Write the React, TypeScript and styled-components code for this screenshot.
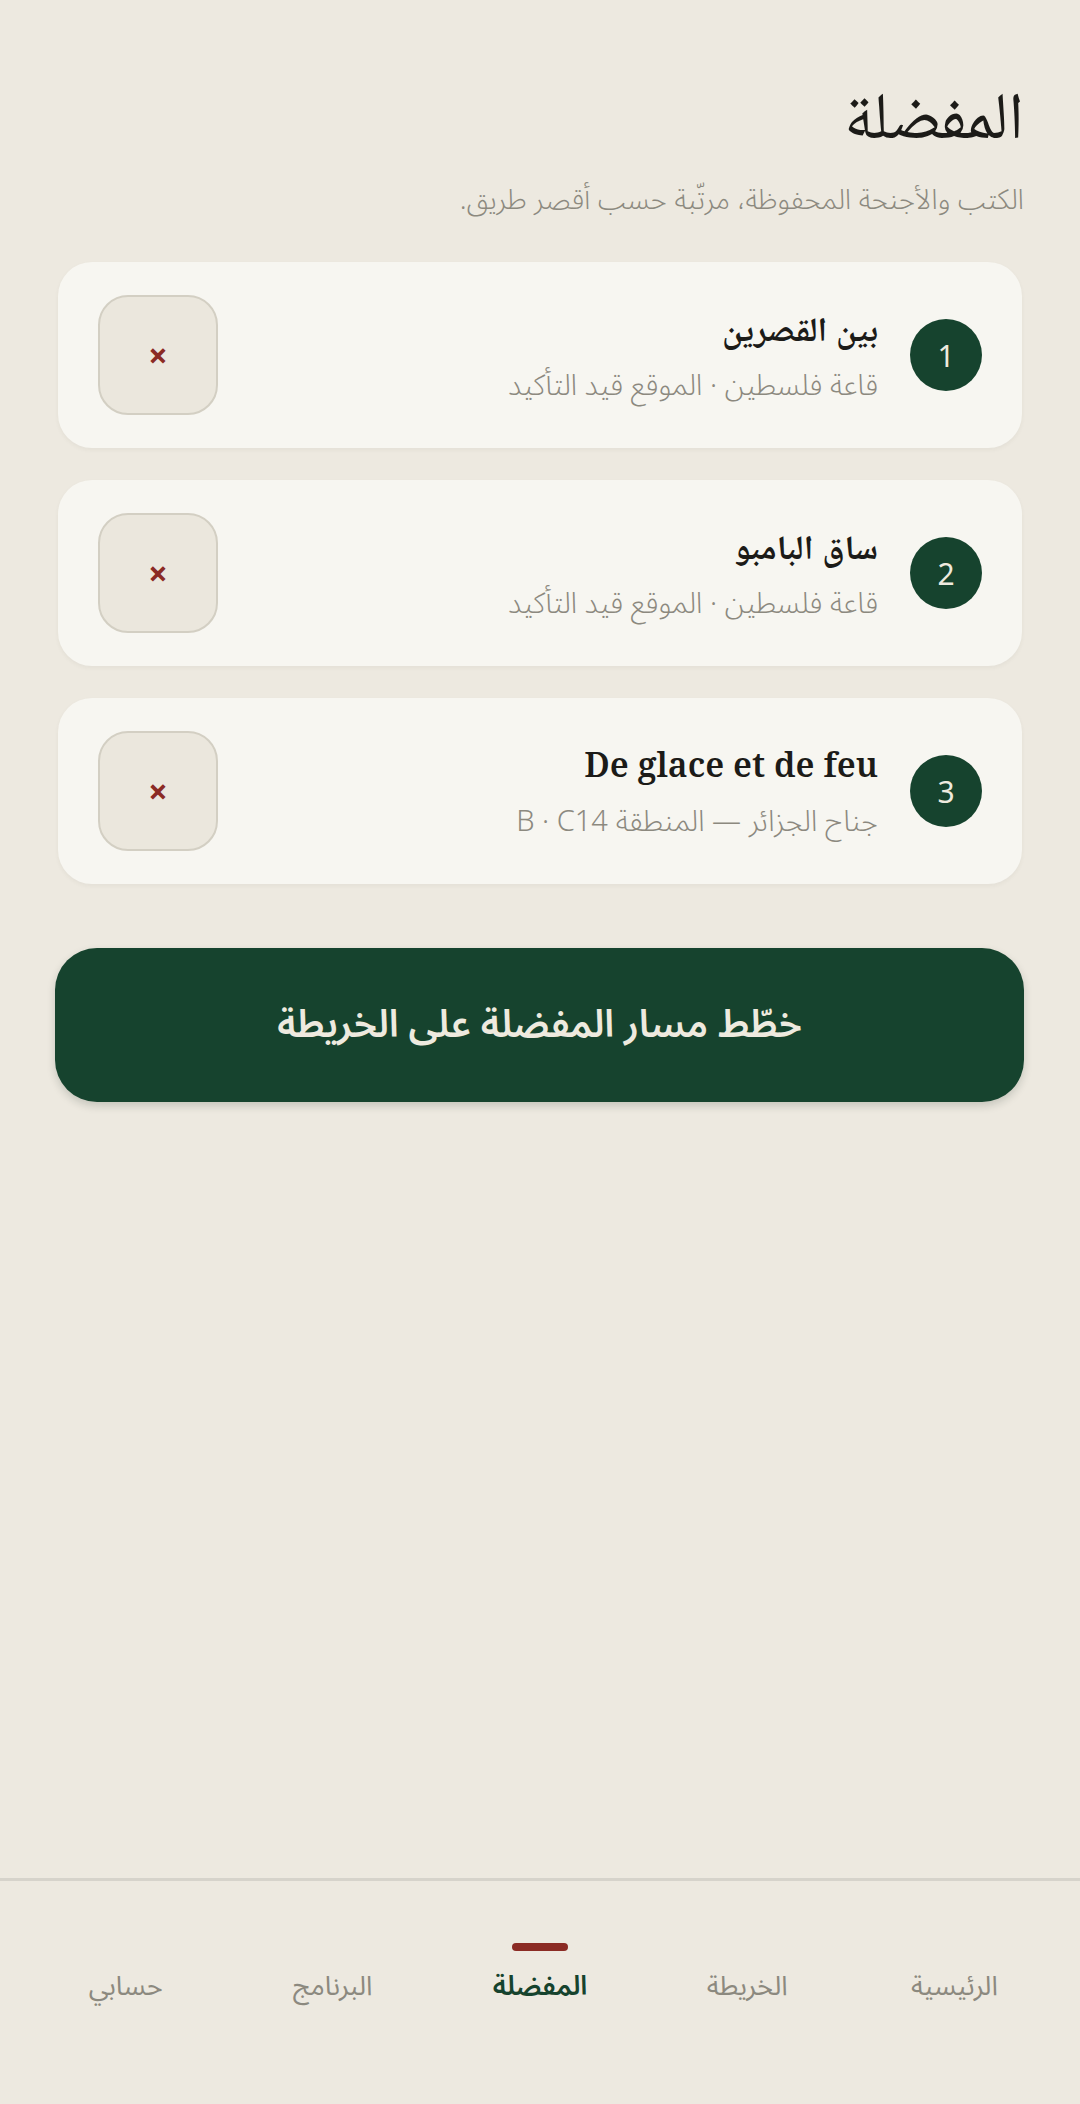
import React from 'react';
import styled, { createGlobalStyle } from 'styled-components';

const GlobalStyle = createGlobalStyle`
  html, body {
    margin: 0;
    padding: 0;
    background: #ede9e0;
  }
  body {
    font-family: "Noto Sans", "Noto Sans Arabic", sans-serif;
  }
`;

const serifStack = '"Noto Serif", "Noto Naskh Arabic", serif';

const Page = styled.div`
  width: 1080px;
  height: 2104px;
  display: flex;
  flex-direction: column;
  background: #ede9e0;
  box-sizing: border-box;
`;

const Main = styled.main`
  flex: 1;
  padding: 66px 56px 0 55px;
  display: flex;
  flex-direction: column;
`;

const Title = styled.h1`
  margin: 0;
  font-family: ${serifStack};
  font-weight: 400;
  font-size: 66px;
  line-height: 92px;
  color: #1c1b18;
`;

const Subtitle = styled.p`
  margin: 20px 0 44px;
  font-size: 28px;
  font-weight: 300;
  line-height: 40px;
  color: #8c897f;
`;

const List = styled.div`
  display: flex;
  flex-direction: column;
  gap: 32px;
  padding: 0 2px 0 3px;
`;

const Card = styled.div`
  display: flex;
  align-items: center;
  gap: 32px;
  padding: 33px 40px;
  background: #f7f6f1;
  border-radius: 34px;
  box-shadow: 0 2px 4px rgba(60, 50, 30, 0.05);
`;

const Rank = styled.div`
  flex: none;
  width: 72px;
  height: 72px;
  border-radius: 50%;
  background: #16432e;
  color: #eeeadf;
  display: flex;
  align-items: center;
  justify-content: center;
  font-size: 30px;
  font-family: "Noto Sans", sans-serif;
`;

const Info = styled.div`
  flex: 1;
  display: flex;
  flex-direction: column;
  gap: 12px;
  text-align: right;
`;

const ItemTitle = styled.div<{ $latin?: boolean }>`
  font-family: ${serifStack};
  font-weight: ${(p) => (p.$latin ? 600 : 700)};
  font-size: 34px;
  line-height: 46px;
  color: #1c1b18;
`;

const ItemMeta = styled.div`
  font-size: 29px;
  font-weight: 300;
  line-height: 42px;
  color: #8c897f;
`;

const RemoveButton = styled.button`
  flex: none;
  width: 120px;
  height: 120px;
  border-radius: 30px;
  border: 2px solid #d3cfc3;
  background: #ebe7dd;
  color: #8b2b24;
  font-family: "Noto Sans", sans-serif;
  font-size: 34px;
  font-weight: 700;
  display: flex;
  align-items: center;
  justify-content: center;
  padding: 0;
  cursor: pointer;
`;

const RouteButton = styled.button`
  margin-top: 64px;
  height: 154px;
  width: 100%;
  border: none;
  border-radius: 42px;
  background: #16432e;
  color: #eeeadf;
  font-family: "Noto Sans", "Noto Sans Arabic", sans-serif;
  font-size: 38px;
  font-weight: 600;
  box-shadow: 0 4px 8px rgba(20, 40, 30, 0.18);
  cursor: pointer;
`;

const Nav = styled.nav`
  height: 226px;
  border-top: 3px solid #d6d3cb;
  display: grid;
  grid-template-columns: repeat(5, 1fr);
  padding: 0 22px;
  box-sizing: border-box;
`;

const NavItem = styled.div<{ $active?: boolean }>`
  display: flex;
  flex-direction: column;
  align-items: center;
  padding-top: 62px;
  gap: 14px;
  font-size: 27px;
  line-height: 40px;
  font-weight: ${(p) => (p.$active ? 600 : 400)};
  color: ${(p) => (p.$active ? '#16432e' : '#8c897f')};
`;

const Indicator = styled.span<{ $active?: boolean }>`
  width: 56px;
  height: 8px;
  border-radius: 4px;
  background: ${(p) => (p.$active ? '#8b2b24' : 'transparent')};
`;

const favourites = [
  { title: 'بين القصرين', meta: 'قاعة فلسطين · الموقع قيد التأكيد' },
  { title: 'ساق البامبو', meta: 'قاعة فلسطين · الموقع قيد التأكيد' },
  { title: 'De glace et de feu', meta: 'جناح الجزائر — المنطقة B · C14', latin: true },
];

const tabs = ['الرئيسية', 'الخريطة', 'المفضلة', 'البرنامج', 'حسابي'];

const App: React.FC = () => {
  return (
    <Page dir="rtl">
      <GlobalStyle />
      <Main>
        <Title>المفضلة</Title>
        <Subtitle>الكتب والأجنحة المحفوظة، مرتّبة حسب أقصر طريق.</Subtitle>
        <List>
          {favourites.map((f, i) => (
            <Card key={f.title}>
              <Rank>{i + 1}</Rank>
              <Info>
                <ItemTitle $latin={f.latin}>{f.title}</ItemTitle>
                <ItemMeta>{f.meta}</ItemMeta>
              </Info>
              <RemoveButton aria-label="إزالة">×</RemoveButton>
            </Card>
          ))}
        </List>
        <RouteButton>خطّط مسار المفضلة على الخريطة</RouteButton>
      </Main>
      <Nav>
        {tabs.map((t) => (
          <NavItem key={t} $active={t === 'المفضلة'}>
            <Indicator $active={t === 'المفضلة'} />
            {t}
          </NavItem>
        ))}
      </Nav>
    </Page>
  );
};

export default App;
